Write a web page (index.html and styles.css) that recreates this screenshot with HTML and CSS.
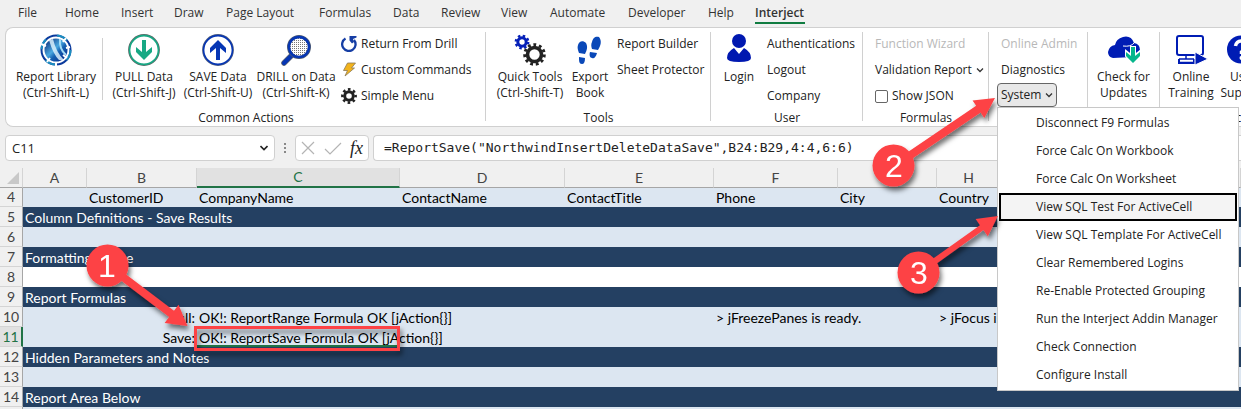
FILE: index.html
```html
<!DOCTYPE html>
<html lang="en">
<head>
<meta charset="utf-8">
<title>Interject Ribbon</title>
<link rel="stylesheet" href="styles.css">
</head>
<body>
<svg class="defs" aria-hidden="true">
  <defs>
    <symbol id="chevron" viewBox="0 0 8 8"><path d="M1 2.500 4 5.500 7 2.500" fill="none" stroke="#333" stroke-width="1.300"/></symbol>
    <linearGradient id="globe" x1="0" y1="0" x2="1" y2="1"><stop offset="0" stop-color="#041c6c"/><stop offset=".45" stop-color="#4aa8e0"/><stop offset=".6" stop-color="#1560b0"/><stop offset="1" stop-color="#03218a"/></linearGradient>
    <pattern id="mesh" width="2" height="2" patternUnits="userSpaceOnUse"><rect width="2" height="2" fill="#fff"/><rect width="1" height="1" fill="#777"/></pattern>
    <filter id="shadow" x="-30%" y="-30%" width="170%" height="170%"><feDropShadow dx="2" dy="4" stdDeviation="2.500" flood-color="#000" flood-opacity=".55"/></filter>
  </defs>
</svg>

<nav class="tabs">
  <a href="#">File</a><a href="#">Home</a><a href="#">Insert</a><a href="#">Draw</a><a href="#">Page Layout</a><a href="#">Formulas</a><a href="#">Data</a><a href="#">Review</a><a href="#">View</a><a href="#">Automate</a><a href="#">Developer</a><a href="#">Help</a><a href="#" class="active">Interject</a>
</nav>

<section class="ribbon">
  <div class="group common">
    <div class="tools">
      <button class="big report">
        <svg class="icon" viewBox="0 0 32 32"><circle cx="16" cy="16" r="14.500" fill="#fff" stroke="#0a3a9c" stroke-width="2"/><circle cx="16" cy="16" r="14.500" fill="none" stroke="#1c8ec0" stroke-width="2" stroke-dasharray="11 12"/><circle cx="16" cy="16" r="11.500" fill="url(#globe)"/><path d="M9 6q4 14 10 20l5 0Q16 18 13 5Z" fill="#e4f6ff" opacity=".8"/><path d="M20 5q-1 10 6 16" stroke="#a4dcf6" stroke-width="2" fill="none"/><path d="m1 10 5 2M26 4l-3 4M27 24l-4-3M7 28l3-4M30 13l-4 1M16 32v-4" stroke="#fff" stroke-width="2"/></svg>
        <span>Report Library<br>(Ctrl-Shift-L)</span>
      </button>
      <i class="divider"></i>
      <button class="big pull">
        <svg class="icon" viewBox="0 0 32 32"><circle cx="16" cy="16" r="15" fill="#fff" stroke="#5f6968" stroke-width="1.800"/><circle cx="16" cy="16" r="14.400" fill="none" stroke="#17a884" stroke-width="1.600"/><path d="M14 6h4v12l6-5v5l-8 8-8-8v-5l6 5Z" fill="#17a884"/></svg>
        <span>PULL Data<br>(Ctrl-Shift-J)</span>
      </button>
      <button class="big pull">
        <svg class="icon" viewBox="0 0 32 32"><circle cx="16" cy="16" r="15" fill="#fff" stroke="#536080" stroke-width="1.800"/><circle cx="16" cy="16" r="14.400" fill="none" stroke="#0636b4" stroke-width="1.600"/><path d="M14 26h4V14l6 5v-5l-8-8-8 8v5l6-5Z" fill="#0636b4"/></svg>
        <span>SAVE Data<br>(Ctrl-Shift-U)</span>
      </button>
      <button class="big drill">
        <svg class="icon" viewBox="0 0 32 32"><path d="m12 21-8 8" stroke="#555e70" stroke-width="5.500" stroke-linecap="round"/><path d="m12 21-8 8" stroke="#0636b4" stroke-width="4" stroke-linecap="round"/><circle cx="19" cy="13" r="10.500" fill="url(#mesh)" stroke="#4c5a74" stroke-width="3"/><circle cx="19" cy="13" r="10" fill="none" stroke="#0636b4" stroke-width="2.400"/></svg>
        <span>DRILL on Data<br>(Ctrl-Shift-K)</span>
      </button>
      <div class="stack">
        <button class="small"><svg class="mini" viewBox="0 0 16 16"><path d="M4.500 2.500A6.700 6.700 0 1 0 13 4" fill="none" stroke="#163ea4" stroke-width="2.300"/><path d="M8.500 0h7v1.500L12 3l1 3-2 1.500-2.500-3Z" fill="#163ea4"/></svg>Return From Drill</button>
        <button class="small"><svg class="mini" viewBox="0 0 16 16"><path d="M6.500 1h8l-4 5h3L4 14l2.500-5.500h-4Z" fill="#f2b31c" stroke="#8a7a58" stroke-width=".8"/></svg>Custom Commands</button>
        <button class="small"><svg class="mini" viewBox="0 0 16 16" fill="none" stroke="#222"><circle cx="8" cy="8" r="4.300" stroke-width="3"/><circle cx="8" cy="8" r="6.600" stroke-width="2.600" stroke-dasharray="2.600 2.584" stroke-dashoffset="1.300"/></svg>Simple Menu</button>
      </div>
    </div>
    <h2>Common Actions</h2>
  </div>

  <div class="group tools-group">
    <div class="tools">
      <button class="big quick">
        <svg class="icon" viewBox="0 0 32 32" fill="none"><g stroke="#0620b8"><circle cx="8" cy="8" r="4.200" stroke-width="3"/><circle cx="8" cy="8" r="6.200" stroke-width="2.400" stroke-dasharray="2.435 2.435"/></g><g stroke="#222"><circle cx="20.500" cy="20.500" r="7" stroke-width="3.600"/><circle cx="20.500" cy="20.500" r="9.800" stroke-width="3" stroke-dasharray="2.800 2.798"/></g></svg>
        <span>Quick Tools<br>(Ctrl-Shift-T)</span>
      </button>
      <button class="big export">
        <svg class="icon" viewBox="0 0 32 32" fill="#0a48b8"><path d="M4 11C5 7 9 6 12 9c2 4 1 7-1 11l-6-1C4 16 3 14 4 11ZM5 23l6 1c0 4-1 6-3 6-3 0-3-3-3-7ZM18 8c1-5 4-6 7-5 3 4 2 8-1 13l-6-1c-1-3-1-5 0-7ZM16 18l7 1c-1 4-3 6-5 5-2 0-3-3-2-6Z"/></svg>
        <span>Export<br>Book</span>
      </button>
      <div class="stack texts">
        <button class="small">Report Builder</button>
        <button class="small">Sheet Protector</button>
      </div>
    </div>
    <h2>Tools</h2>
  </div>

  <div class="group user-group">
    <div class="tools">
      <button class="big login">
        <svg class="icon" viewBox="0 0 32 32" fill="#0018b0"><circle cx="16" cy="7" r="7"/><path d="M4 24q0-6 7-10l5 6 5-6q7 4 7 10 0 4-12 4T4 24Z"/></svg>
        <span>Login</span>
      </button>
      <div class="stack">
        <button class="small">Authentications</button>
        <button class="small">Logout</button>
        <button class="small">Company</button>
      </div>
    </div>
    <h2>User</h2>
  </div>

  <div class="group formulas-group">
    <div class="tools">
      <div class="stack">
        <button class="small" disabled>Function Wizard</button>
        <button class="small">Validation Report<svg class="chev"><use href="#chevron"/></svg></button>
        <label class="small"><input type="checkbox">Show JSON</label>
      </div>
    </div>
    <h2>Formulas</h2>
  </div>

  <div class="group system-group">
    <div class="tools">
      <div class="stack">
        <button class="small" disabled>Online Admin</button>
        <button class="small">Diagnostics</button>
        <div class="dropdown">
          <button class="small open" aria-expanded="true">System<svg class="chev"><use href="#chevron"/></svg></button>
          <div class="menu">
            <button>Disconnect F9 Formulas</button>
            <button>Force Calc On Workbook</button>
            <button>Force Calc On Worksheet</button>
            <button class="selected">View SQL Test For ActiveCell</button>
            <button>View SQL Template For ActiveCell</button>
            <button>Clear Remembered Logins</button>
            <button>Re-Enable Protected Grouping</button>
            <button>Run the Interject Addin Manager</button>
            <button>Check Connection</button>
            <button>Configure Install</button>
          </div>
        </div>
      </div>
    </div>
  </div>

  <div class="group updates-group">
    <div class="tools">
      <button class="big updates">
        <svg class="icon" viewBox="0 0 32 32"><path d="M5 24q-5-1-5-6 1-6 7-7 1-6 8-8 8-2 11 6 6 1 6 7-1 7-7 7Z" fill="#001cb4"/><path d="M15 12q8 1 11-3" stroke="#fff" fill="none"/><path d="M23 13h4v8l5-4v5l-7 7-7-7v-5l5 4Z" fill="#fff" stroke="#fff" stroke-width="2"/><path d="M23 13h4v9l5-4v4l-7 7-7-7v-4l5 4Z" fill="#06b68c"/></svg>
        <span>Check for<br>Updates</span>
      </button>
    </div>
  </div>

  <div class="group help-group">
    <div class="tools">
      <button class="big training">
        <svg class="icon" viewBox="0 0 32 32" fill="none" stroke="#001cb4" stroke-width="2"><rect x="2" y="2" width="26" height="19" rx="2"/><path d="M11 21v4M4 25h15M5 28.500h15" stroke-width="1.500"/><path d="M4 25v4h15v-4"/><path d="M20 18v13l13-6Z" fill="#001cb4" stroke="#fff" stroke-width="1"/></svg>
        <span>Online<br>Training</span>
      </button>
      <button class="big support">
        <svg class="icon" viewBox="0 0 32 32"><circle cx="14" cy="15.500" r="14" fill="#001cb4"/><path d="M8.500 12q1-5 6-5t5 5q0 3-5 6v2" fill="none" stroke="#fff" stroke-width="3.500"/><circle cx="14.500" cy="24" r="2" fill="#fff"/></svg>
        <span>User<br>Support</span>
      </button>
    </div>
    <h2>Resources</h2>
  </div>
</section>

<section class="formula-bar">
  <div class="name-box">
    <input type="text" value="C11" aria-label="Name box">
    <button aria-label="Show names"><svg viewBox="0 0 8 8"><path d="M.5 2 4 5.500 7.500 2" fill="none" stroke="#222" stroke-width="1.600"/></svg></button>
  </div>
  <svg class="grip" viewBox="0 0 4 14" fill="#888"><rect x="1" y="2" width="2" height="2"/><rect x="1" y="6" width="2" height="2"/><rect x="1" y="10" width="2" height="2"/></svg>
  <div class="fx-box">
    <button aria-label="Cancel"><svg viewBox="0 0 14 14"><path d="m1 1 12 12M13 1 1 13" stroke="#b4b4b4" stroke-width="1.200"/></svg></button>
    <button aria-label="Enter"><svg viewBox="0 0 18 14"><path d="m1 8 5 5L17 2" fill="none" stroke="#b4b4b4" stroke-width="1.200"/></svg></button>
    <button class="fx" aria-label="Insert function">fx</button>
  </div>
  <input class="formula" type="text" aria-label="Formula" value="=ReportSave(&quot;NorthwindInsertDeleteDataSave&quot;,B24:B29,4:4,6:6)">
</section>

<table class="sheet">
  <colgroup><col class="c-head"><col class="c-a"><col class="c-b"><col class="c-c"><col class="c-d"><col class="c-e"><col class="c-f"><col class="c-g"><col class="c-h"><col></colgroup>
  <thead>
    <tr><th><svg class="corner" viewBox="0 0 12 12"><path d="M12 0v12H0Z" fill="#c8c8c8"/></svg></th><th>A</th><th>B</th><th class="on">C</th><th>D</th><th>E</th><th>F</th><th>G</th><th>H</th><th></th></tr>
  </thead>
  <tbody>
    <tr class="first"><th>4</th><td></td><td>CustomerID</td><td>CompanyName</td><td>ContactName</td><td>ContactTitle</td><td>Phone</td><td>City</td><td>Country</td><td></td></tr>
    <tr class="dark"><th>5</th><td colspan="9">Column Definitions - Save Results</td></tr>
    <tr><th>6</th><td colspan="9"></td></tr>
    <tr class="dark"><th>7</th><td colspan="9">Formatting Range</td></tr>
    <tr class="plain"><th>8</th><td colspan="9"></td></tr>
    <tr class="dark"><th>9</th><td colspan="9">Report Formulas</td></tr>
    <tr><th>10</th><td></td><td class="right">Pull:</td><td>OK!: ReportRange Formula OK [jAction{}]</td><td></td><td></td><td>&gt; jFreezePanes is ready.</td><td></td><td>&gt; jFocus is ready.</td><td></td></tr>
    <tr><th class="on">11</th><td></td><td class="right">Save:</td><td class="cell-on">OK!: ReportSave Formula OK [jAction{}]</td><td></td><td></td><td></td><td></td><td></td><td></td></tr>
    <tr class="dark"><th>12</th><td colspan="9">Hidden Parameters and Notes</td></tr>
    <tr><th>13</th><td colspan="9"></td></tr>
    <tr class="dark"><th>14</th><td colspan="9">Report Area Below</td></tr>
    <tr><th>15</th><td colspan="9"></td></tr>
  </tbody>
</table>

<svg class="notes" width="1241" height="409" viewBox="0 0 1241 409">
  <g filter="url(#shadow)" fill="#fd4245">
    <rect x="195.500" y="327.500" width="203" height="22" fill="none" stroke="#fd4245" stroke-width="3"/>
    <path transform="translate(187.500 326) rotate(37.200)" d="M0 0-20-11.500V-4H-85V4H-20V11.500Z"/>
    <circle cx="107.500" cy="265.500" r="21"/>
    <path transform="translate(995 98) rotate(-34)" d="M0 0-20-10.500V-4H-105V4H-20V10.500Z"/>
    <circle cx="893.500" cy="165.500" r="21"/>
    <path transform="translate(998 216) rotate(-35.500)" d="M0 0-20-10.500V-3H-80V3H-20V10.500Z"/>
    <circle cx="918.500" cy="272.500" r="21"/>
  </g>
  <g class="digits">
    <text x="107" y="277">1</text>
    <text x="894" y="177">2</text>
    <text x="919" y="284">3</text>
  </g>
</svg>
</body>
</html>
```
FILE: styles.css
```css
* { box-sizing: border-box; }

html { height: 100%; overflow: hidden; }

body {
  margin: 0;
  min-height: 100%;
  position: relative;
  overflow: hidden;
  background: #f0f0f0;
  color: #222;
  font: 12px/16px "Open Sans", "Noto Sans", sans-serif;
}

button, input {
  font: inherit;
  color: inherit;
  background: none;
  border: 0;
  margin: 0;
  padding: 0;
}

.defs { position: absolute; width: 0; height: 0; }

.tabs {
  display: grid;
  grid-template-columns: 47px 56px 53px 52px 93px 74px 48px 60px 49px 78px 80px 47px 50px;
  height: 27px;
  padding: 5px 0 0 18px;
}
.tabs a {
  color: #333;
  text-decoration: none;
  white-space: nowrap;
}
.tabs .active {
  height: 19px;
  font-weight: 600;
  border-bottom: 2px solid #107c41;
}

.ribbon {
  display: flex;
  height: 100px;
  margin-left: 5px;
  background: #fff;
  border: 1px solid #d0d0d0;
  border-right: 0;
  border-radius: 8px 0 0 8px;
}
.group {
  flex: none;
  display: flex;
  flex-direction: column;
  background: linear-gradient(#d0d0d0, #d0d0d0) no-repeat right 4px / 1px 89px;
}
.group h2 {
  margin: 0;
  font: inherit;
  text-align: center;
}
.tools { display: flex; height: 82px; padding-left: 4px; }
.common { width: 480px; }
.tools-group { width: 225px; }
.user-group { width: 152px; }
.formulas-group { width: 126px; }
.system-group { width: 99px; }
.updates-group { width: 72px; }
.help-group { width: 130px; }
.formulas-group .tools, .system-group .tools { padding-left: 8px; }

.divider {
  width: 1px;
  height: 62px;
  margin: 10px 4px 0 0;
  background: #d0d0d0;
}
.big {
  display: flex;
  flex-direction: column;
  align-items: center;
  gap: 3px;
  padding-top: 6px;
  white-space: nowrap;
}
.big span { display: block; }
.icon { width: 32px; height: 32px; overflow: visible; }
.report { width: 92px; }
.pull { width: 74px; }
.drill { width: 82px; }
.quick { width: 80px; }
.export { width: 40px; }
.login { width: 48px; }
.updates { width: 63px; }
.training { width: 54px; }
.support { width: 50px; }

.stack { display: flex; flex-direction: column; padding-top: 3px; }
.texts { padding-left: 3px; }
.small {
  display: flex;
  align-items: center;
  gap: 4px;
  height: 26px;
  padding: 0 4px;
  white-space: nowrap;
}
.small:disabled { color: #b8b8b8; }
.mini { width: 16px; height: 16px; }
.chev { width: 8px; height: 8px; }
.small input {
  appearance: none;
  width: 13px;
  height: 13px;
  border: 1px solid #666;
  border-radius: 2px;
  background: #fff;
}

.dropdown { position: relative; }
.open {
  height: 24px;
  padding: 0 3px;
  background: #e8e8e8;
  border: 1px solid #666;
  border-radius: 4px;
}
.menu {
  position: absolute;
  top: 24px;
  left: 0;
  width: 242px;
  padding: 1px;
  background: #fff;
  border: 1px solid #c8c8c8;
}
.menu button {
  display: block;
  width: 100%;
  height: 28px;
  padding-left: 37px;
  text-align: left;
  white-space: nowrap;
}
.menu .selected {
  padding-left: 35px;
  background: #f4f4f4;
  border: 2px solid #000;
}

.formula-bar {
  display: flex;
  height: 26px;
  margin: 8px 0 7px 5px;
}
.name-box, .fx-box, .formula {
  background: #fff;
  border: 1px solid #d0d0d0;
  border-radius: 4px;
}
.name-box { display: flex; width: 270px; padding: 0 6px; }
.name-box input { flex: 1; min-width: 0; font-size: 13px; }
.name-box button { width: 8px; }
.name-box svg { width: 8px; height: 8px; }
.grip { width: 4px; height: 14px; margin: 6px 8px; }
.fx-box {
  display: flex;
  align-items: center;
  justify-content: space-between;
  width: 74px;
  padding: 0 5px;
}
.fx-box svg { display: block; height: 14px; }
.fx { font: italic 18px/20px "Liberation Serif", serif; }
.formula {
  flex: 1;
  min-width: 0;
  margin-left: 4px;
  padding-left: 10px;
  border-right: 0;
  border-radius: 4px 0 0 4px;
  font-family: "DejaVu Sans Mono", monospace;
  font-size: 13px;
}

.sheet {
  width: 100%;
  table-layout: fixed;
  border-collapse: separate;
  border-spacing: 0;
  font: 14px/19px Lato, "Open Sans", sans-serif;
  color: #000;
}
.c-head { width: 23px; }
.c-a { width: 64px; }
.c-b { width: 110px; }
.c-c { width: 203px; }
.c-d { width: 165px; }
.c-e { width: 149px; }
.c-f { width: 124px; }
.c-g { width: 99px; }
.c-h { width: 64px; }
.sheet th {
  padding: 0;
  font: 14px/19px Lato, "Open Sans", sans-serif;
  color: #444;
}
.sheet thead th {
  height: 20px;
  border-bottom: 1px solid #a6a6a6;
  border-right: 1px solid #d4d4d4;
}
.sheet thead .on {
  color: #217346;
  background: #e1e1e1;
  border-bottom: 2px solid #217346;
  line-height: 18px;
}
.sheet tbody th {
  border-right: 1px solid #a6a6a6;
  border-bottom: 1px solid #d4d4d4;
}
.sheet tbody .on {
  color: #217346;
  background: #e1e1e1;
  border-right: 2px solid #217346;
}
.corner { display: block; width: 12px; height: 12px; margin-left: 7px; }
.sheet td {
  height: 20px;
  padding: 0 2px;
  background: #dce6f1;
  white-space: nowrap;
}
.sheet .first td { height: 19px; }
.sheet .first th { line-height: 18px; }
.sheet .dark td { background: #244062; color: #fff; }
.sheet .plain td { background: #fff; }
.sheet .right { text-align: right; }
.sheet .cell-on { background: #dce6f1 linear-gradient(#217346, #217346) no-repeat left bottom / 100% 2px; }

.notes { position: absolute; top: 0; left: 0; pointer-events: none; }
.digits {
  fill: #fff;
  font: 32px "Liberation Sans", sans-serif;
  text-anchor: middle;
}
```
